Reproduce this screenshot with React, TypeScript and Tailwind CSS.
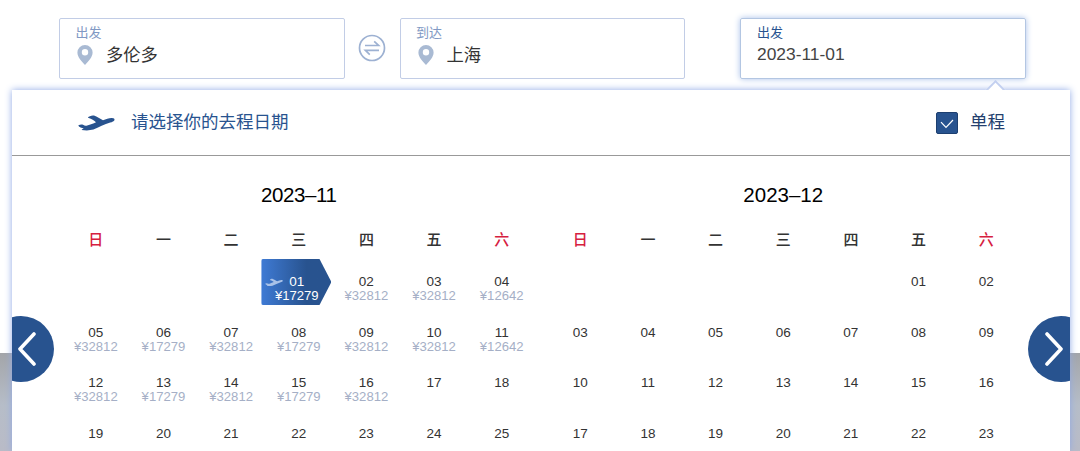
import React, { useState } from 'react';

interface Day {
  day: string;
  price?: string;
}

interface Month {
  title: string;
  offset: number;
  days: Day[];
}

const WEEKDAYS = ['日', '一', '二', '三', '四', '五', '六'];
const VISIBLE_WEEKS = 4;

const PRICES = [
  '17279', '32812', '32812', '12642',
  '32812', '17279', '32812', '17279', '32812', '32812', '12642',
  '32812', '17279', '32812', '17279', '32812'
];

const buildDays = (count: number, prices: string[] = []): Day[] =>
  Array.from({ length: count }, (_, i) => ({
    day: String(i + 1).padStart(2, '0'),
    price: prices[i]
  }));

const MONTHS: Month[] = [
  { title: '2023–11', offset: 3, days: buildDays(30, PRICES) },
  { title: '2023–12', offset: 5, days: buildDays(31) }
];

const PlaneIcon: React.FC<{ className?: string }> = ({ className }) => (
  <svg viewBox="0 0 37 16" className={className} fill="currentColor">
    <path d="M0.2 10.6C1.8 9.6 3.6 9.2 5 9.8C6.6 10.6 7.6 11 9.2 10.4C12.4 9.6 15.4 8.4 18 7.2C15.8 5.2 13 3.6 9.8 2.8C11 1.2 13.6 0.2 16 0.6C19.2 1.6 22 4.2 25 5.2C28 4.4 30.6 3.2 33.6 3C35.8 2.9 36.8 3.8 36.5 5C36 6.4 34.2 7 32.2 7.6C26.4 9.4 20.8 12.4 15.4 14.6C11.8 15.6 7.4 15.6 3.6 15C4 14.2 5 13.7 6 13.3C3.8 13.4 1.4 12.4 0.2 10.6Z" />
  </svg>
);

const PinIcon: React.FC = () => (
  <svg viewBox="0 0 16 20" className="h-5 w-4 text-[#a9bad3]" fill="currentColor">
    <path fillRule="evenodd" d="M8 0a7.6 7.6 0 0 0-7.6 7.6C0.4 12.2 4.4 16.2 8 20c3.6-3.8 7.6-7.8 7.6-12.4A7.6 7.6 0 0 0 8 0Zm0 4.1a3.2 3.2 0 1 1 0 6.4 3.2 3.2 0 0 1 0-6.4Z" />
  </svg>
);

const SwapIcon: React.FC = () => (
  <svg viewBox="0 0 28 28" className="h-7 w-7 text-[#9db1d2]" fill="none" stroke="currentColor">
    <circle cx="14" cy="14" r="12.5" strokeWidth="1.7" />
    <path d="M7 11.5H20.6L16.2 7.4M21 16.4H7.4L11.8 20.6" strokeWidth="1.7" />
  </svg>
);

const CityField: React.FC<{ label: string; city: string }> = ({ label, city }) => (
  <div className="h-[61px] w-[285.5px] rounded-[2px] border border-[#c2cde6] pl-[15.5px]">
    <div className="mt-[5px] h-[18px] text-[13px] leading-[18px] text-[#8199c4]">{label}</div>
    <div className="flex h-[26px] items-center gap-[13px] pl-[1.5px]">
      <PinIcon />
      <span className="text-[17.3px] leading-[26px] text-[#333]">{city}</span>
    </div>
  </div>
);

const DayCell: React.FC<{ item: Day; selected: boolean; onSelect: () => void }> = ({ item, selected, onSelect }) => (
  <button
    className={`relative flex h-[50.5px] flex-col items-center pt-[18px] text-[13.5px] leading-[14px] ${selected ? 'text-white' : 'text-[#333]'}`}
    onClick={onSelect}
  >
    {selected && (
      <span className="absolute top-[2px] -left-[3.5px] h-[46px] w-[70px] rounded-[2px] bg-linear-to-r from-[#3f7bd5] to-[#28538f] to-65% [clip-path:polygon(0_0,83%_0,100%_50%,83%_100%,0_100%)]">
        <PlaneIcon className="absolute top-[19px] left-1 h-[9px] w-[18px] text-[#a9c2e8]" />
      </span>
    )}
    <span className={selected ? 'relative -left-0.5' : ''}>{item.day}</span>
    {item.price && (
      <span className={`text-[13.1px] leading-[13px] ${selected ? 'relative -left-0.5' : 'text-[#a5afc6]'}`}>¥{item.price}</span>
    )}
  </button>
);

const MonthGrid: React.FC<{ month: Month; selected: string; onSelect: (key: string) => void }> = ({ month, selected, onSelect }) => (
  <div className="w-[473.5px] [&:first-child>h3]:tracking-[-0.4px]">
    <h3 className="text-center text-[20.5px] leading-[26px] text-black">{month.title}</h3>
    <div className="mt-5 grid grid-cols-7 text-center text-[15px] leading-[24px] font-medium">
      {WEEKDAYS.map((name, i) => (
        <span key={name} className={i === 0 || i === 6 ? 'text-[#d6203f]' : 'text-[#333]'}>{name}</span>
      ))}
    </div>
    <div className="mt-[5px] grid grid-cols-7">
      {Array.from({ length: month.offset }, (_, i) => <span key={i} />)}
      {month.days.slice(0, VISIBLE_WEEKS * 7 - month.offset).map((item) => {
        const key = `${month.title}-${item.day}`;
        return <DayCell key={key} item={item} selected={selected === key} onSelect={() => onSelect(key)} />;
      })}
    </div>
  </div>
);

const App: React.FC = () => {
  const [selected, setSelected] = useState('2023–11-01');
  const [oneWay, setOneWay] = useState(true);

  return (
    <div className="flex h-[451px] w-[1080px] flex-col overflow-hidden bg-[linear-gradient(to_bottom,#fff_353px,#a3a5a9_353px,#b6bdc8_405px,#b9bbc7_451px)] font-['Liberation_Sans','Noto_Sans_CJK_SC',sans-serif]">
      <div className="flex h-[90px] shrink-0 pt-[18px] pl-[59px]">
        <CityField label="出发" city="多伦多" />
        <button className="mx-[13.5px] flex h-[60px] w-7 items-center justify-center">
          <SwapIcon />
        </button>
        <CityField label="到达" city="上海" />
        <div className="ml-[55px] h-[61px] w-[286px] rounded-[2px] border border-[#b3c6e2] pl-4 shadow-[0_0_6px_#a9c0ea]">
          <div className="mt-[5px] h-[18px] text-[13px] leading-[18px] text-[#28538f]">出发</div>
          <div className="text-[17.4px] leading-[25px] text-[#444]">2023-11-01</div>
        </div>
      </div>

      <div className="relative mr-[10px] ml-[12px] flex-1 bg-white shadow-[0_0_7px_#8fa9e6]">
        <span className="absolute -top-[7px] right-[67.5px] h-[15px] w-[15px] rotate-45 border-t-2 border-l-2 border-[#c3d0f0] bg-white" />
        <div className="relative flex h-[66px] items-center border-b border-[#999] bg-white pr-[65px] pl-[65.5px]">
          <PlaneIcon className="h-4 w-[37px] text-[#28538f]" />
          <span className="ml-[16.5px] text-[17.5px] text-[#28538f]">请选择你的去程日期</span>
          <button className="ml-auto flex items-center gap-3" onClick={() => setOneWay(!oneWay)}>
            <span className="flex h-[22px] w-[22px] items-center justify-center rounded-[2px] border border-[#1d3f70] bg-[#28538f]">
              {oneWay && (
                <svg viewBox="0 0 14 10" className="mt-0.5 h-[10px] w-[14px]" fill="none" stroke="#fff" strokeWidth="1.2">
                  <path d="M1 3.2L6 8.4L13 1" />
                </svg>
              )}
            </span>
            <span className="text-[17.5px] text-[#243f6e]">单程</span>
          </button>
        </div>

        <div className="relative flex h-[295px] gap-[11px] overflow-hidden pt-[26px] pl-[50px]">
          {MONTHS.map((month) => (
            <MonthGrid key={month.title} month={month} selected={selected} onSelect={setSelected} />
          ))}
          <button className="absolute top-[160px] -left-[24px] flex h-[66px] w-[66px] items-center justify-center rounded-full bg-[#28538f]">
            <svg viewBox="0 0 20 34" className="ml-[11px] h-[34px] w-5" fill="none" stroke="#fff" strokeWidth="3.6" strokeLinecap="round" strokeLinejoin="round">
              <path d="M17 2L3 17L17 32" />
            </svg>
          </button>
          <button className="absolute top-[160px] -right-[24px] flex h-[66px] w-[66px] items-center justify-center rounded-full bg-[#28538f]">
            <svg viewBox="0 0 20 34" className="mr-[15px] h-[34px] w-5" fill="none" stroke="#fff" strokeWidth="3.6" strokeLinecap="round" strokeLinejoin="round">
              <path d="M3 2L17 17L3 32" />
            </svg>
          </button>
        </div>
      </div>
    </div>
  );
};

export default App;
